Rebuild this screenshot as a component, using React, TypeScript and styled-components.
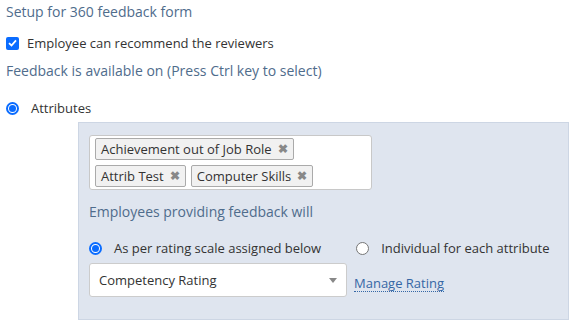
import React from "react";
import styled, { createGlobalStyle } from "styled-components";

const Global = createGlobalStyle`
  html, body { margin: 0; padding: 0; background: #fff; }
  body { font-family: "Open Sans", "Noto Sans", sans-serif; font-size: 13px; color: #333; }
`;

const Page = styled.div`
  width: 570px;
  height: 324px;
  padding: 2px 0 0 6px;
  box-sizing: border-box;
  display: flex;
  flex-direction: column;
`;

const Heading = styled.div<{ $mt?: number }>`
  color: #4f6c8c;
  font-size: 14px;
  line-height: 19px;
  margin-top: ${(p) => p.$mt ?? 0}px;
`;

const OptionRow = styled.label<{ $mt?: number; $gap?: number }>`
  display: flex;
  align-items: center;
  gap: ${(p) => p.$gap ?? 8}px;
  margin-top: ${(p) => p.$mt ?? 0}px;
  font-size: 13px;
  line-height: 18px;
  color: #333;
`;

const Check = styled.span`
  width: 13px;
  height: 13px;
  border-radius: 2px;
  background: #0a6cff;
  display: flex;
  align-items: center;
  justify-content: center;
`;

const Radio = styled.span<{ $on?: boolean }>`
  width: 13px;
  height: 13px;
  box-sizing: border-box;
  border-radius: 50%;
  border: ${(p) => (p.$on ? "2px solid #0a6cff" : "1px solid #767676")};
  background: #fff;
  display: flex;
  align-items: center;
  justify-content: center;
  &::after {
    content: "";
    display: ${(p) => (p.$on ? "block" : "none")};
    width: 7px;
    height: 7px;
    border-radius: 50%;
    background: #0a6cff;
  }
`;

const Panel = styled.div`
  margin: 5px 0 0 72px;
  width: 491px;
  height: 198px;
  box-sizing: border-box;
  background: #dfe5ef;
  border: 1px solid #cdd6e4;
  padding: 12px 10px 0 10px;
  display: flex;
  flex-direction: column;
`;

const TagBox = styled.div`
  width: 283px;
  height: 55px;
  box-sizing: border-box;
  background: #fff;
  border: 1px solid #c8c8c8;
  border-radius: 3px;
  padding: 2px 5px;
  display: flex;
  flex-wrap: wrap;
  align-content: flex-start;
  gap: 5px 5px;
`;

const Tag = styled.span`
  height: 22px;
  box-sizing: border-box;
  border: 1px solid #aaa;
  border-radius: 2px;
  background: #f1f1f1;
  padding: 0 5px;
  display: inline-flex;
  align-items: center;
  gap: 6px;
  font-size: 13px;
  color: #333;
`;

const TagX = styled.span`
  color: #888;
  font-size: 12px;
  font-weight: bold;
  line-height: 1;
`;

const RadioGroup = styled.div`
  display: flex;
  gap: 35px;
  margin-top: 18px;
`;

const Controls = styled.div`
  display: flex;
  align-items: center;
  margin-top: 6px;
  gap: 7px;
`;

const Select = styled.div`
  width: 258px;
  height: 34px;
  box-sizing: border-box;
  background: #fff;
  border: 1px solid #ccc;
  border-radius: 3px;
  padding: 0 9px;
  display: flex;
  align-items: center;
  justify-content: space-between;
  font-size: 13px;
  color: #333;
`;

const Caret = styled.span`
  width: 0;
  height: 0;
  border-left: 4px solid transparent;
  border-right: 4px solid transparent;
  border-top: 5px solid #888;
`;

const Link = styled.a`
  color: #3567a5;
  font-size: 13px;
  text-decoration: none;
  border-bottom: 1px dotted #3567a5;
  line-height: 16px;
  margin-top: 7px;
  cursor: pointer;
`;

export default function App() {
  const tags = ["Achievement out of Job Role", "Attrib Test", "Computer Skills"];
  return (
    <>
      <Global />
      <Page>
        <Heading>Setup for 360 feedback form</Heading>
        <OptionRow $mt={13}>
          <Check>
            <svg width="9" height="8" viewBox="0 0 9 8">
              <path d="M1 4.2 L3.5 6.5 L8 1.3" fill="none" stroke="#fff" strokeWidth="1.8" />
            </svg>
          </Check>
          Employee can recommend the reviewers
        </OptionRow>
        <Heading $mt={9}>Feedback is available on (Press Ctrl key to select)</Heading>
        <OptionRow $mt={19} $gap={12}>
          <Radio $on />
          Attributes
        </OptionRow>
        <Panel>
          <TagBox>
            {tags.map((t) => (
              <Tag key={t}>
                {t}
                <TagX>✖</TagX>
              </Tag>
            ))}
          </TagBox>
          <Heading $mt={12}>Employees providing feedback will</Heading>
          <RadioGroup>
            <OptionRow $gap={12}>
              <Radio $on />
              As per rating scale assigned below
            </OptionRow>
            <OptionRow $gap={12}>
              <Radio />
              Individual for each attribute
            </OptionRow>
          </RadioGroup>
          <Controls>
            <Select>
              Competency Rating
              <Caret />
            </Select>
            <Link>Manage Rating</Link>
          </Controls>
        </Panel>
      </Page>
    </>
  );
}
